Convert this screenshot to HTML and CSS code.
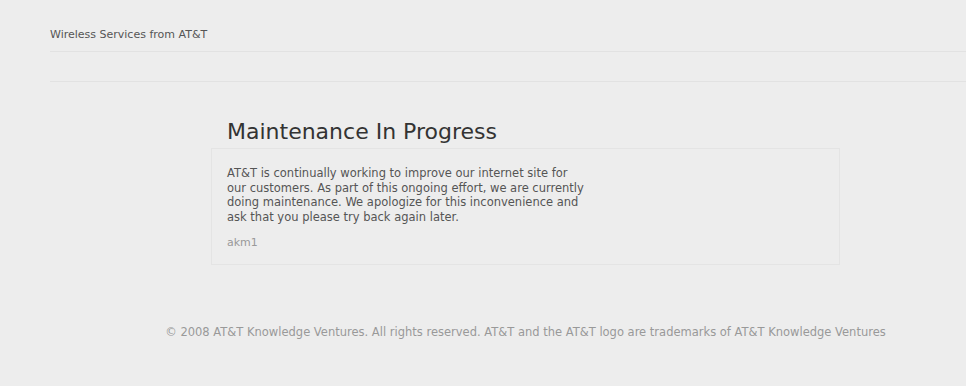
FILE: index.html
```html
<!DOCTYPE html>
<html lang="en">
<head>
<meta charset="UTF-8">
<title>AT&amp;T Wireless - Maintenance</title>
<link rel="stylesheet" href="styles.css">
</head>
<body>
<div class="header">
    <div class="brand">Wireless Services from AT&amp;T</div>
    <div class="nav-bar"></div>
</div>
<div class="content">
    <h1>Maintenance In Progress</h1>
    <div class="box">
        <p class="message">AT&amp;T is continually working to improve our internet site for our customers. As part of this ongoing effort, we are currently doing maintenance. We apologize for this inconvenience and ask that you please try back again later.</p>
        <p class="server">akm1</p>
    </div>
    <div class="footer">
        <abbr title="Copyright">&copy;</abbr> 2008 AT&amp;T Knowledge Ventures. All rights reserved. AT&amp;T and the AT&amp;T logo are trademarks of AT&amp;T Knowledge Ventures
    </div>
</div>
</body>
</html>
```

FILE: styles.css
```css
body {
    font-family: "DejaVu Sans", Verdana, sans-serif;
    margin: 0;
    padding: 0;
    background-color: #ededed;
    color: #555;
}
.header {
    margin-left: 50px;
}
.brand {
    font-size: 11px;
    color: #555;
    padding-top: 28px;
    height: 23px;
    border-bottom: 1px solid #e2e2e2;
}
.nav-bar {
    height: 29px;
    border-bottom: 1px solid #e2e2e2;
}
.content {
    width: 629px;
    margin-left: 211px;
}
h1 {
    font-size: 22px;
    font-weight: normal;
    color: #333;
    margin: 34px 0 0 16px;
    line-height: 32px;
}
.box {
    border: 1px solid #e4e4e4;
    padding: 17px 15px 14px;
}
.message {
    width: 360px;
    margin: 0;
    font-size: 11.5px;
    line-height: 14.7px;
}
.server {
    margin: 11px 0 0;
    font-size: 11px;
    line-height: 14px;
    color: #999;
}
.footer {
    margin: 60px -150px 0;
    text-align: center;
    white-space: nowrap;
    font-size: 11.5px;
    color: #999;
}
abbr {
    text-decoration: none;
    border-bottom: 1px dotted #888;
}
```
